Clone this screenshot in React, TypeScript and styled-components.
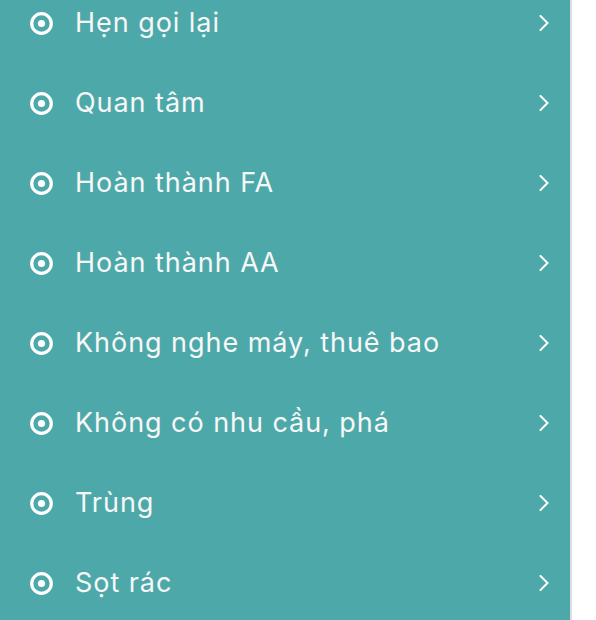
import React from "react";
import styled, { createGlobalStyle } from "styled-components";

const GlobalStyle = createGlobalStyle`
  html, body {
    margin: 0;
    padding: 0;
    background: #ffffff;
    overflow: hidden;
  }
  body {
    font-family: Inter, "Noto Sans", sans-serif;
  }
`;

const Page = styled.div`
  display: flex;
  width: 596px;
  height: 620px;
  overflow: hidden;
  background: #ffffff;
`;

const Panel = styled.nav`
  width: 570px;
  height: 620px;
  flex: 0 0 auto;
  background: #4da9a9;
  border-right: 2px solid #dedede;
  overflow: hidden;
`;

const List = styled.ul`
  list-style: none;
  margin: -17px 0 0 0;
  padding: 0;
  display: flex;
  flex-direction: column;
`;

const Row = styled.li`
  height: 80px;
  display: flex;
  align-items: center;
  padding: 0 21px 0 30px;
  gap: 22px;
  color: #f7f7f7;
`;

const Label = styled.span`
  flex: 1;
  font-family: Inter, "Noto Sans", sans-serif;
  font-size: 27px;
  font-weight: 400;
  letter-spacing: 0.95px;
  line-height: 32px;
  white-space: nowrap;
`;

const RadioIcon = () => (
  <svg width="23" height="23" viewBox="0 0 23 23" aria-hidden>
    <circle cx="11.5" cy="11.5" r="9.8" fill="none" stroke="#ffffff" strokeWidth="3.2" />
    <circle cx="11.5" cy="11.5" r="3.6" fill="#ffffff" />
  </svg>
);

const Chevron = () => (
  <svg width="10" height="16" viewBox="0 0 10 16" aria-hidden>
    <path d="M1.5 1 L8.5 8 L1.5 15" fill="none" stroke="#ffffff" strokeWidth="2" strokeLinecap="square" />
  </svg>
);

const items = [
  "Hẹn gọi lại",
  "Quan tâm",
  "Hoàn thành FA",
  "Hoàn thành AA",
  "Không nghe máy, thuê bao",
  "Không có nhu cầu, phá",
  "Trùng",
  "Sọt rác",
];

export default function App() {
  return (
    <>
      <GlobalStyle />
      <Page>
        <Panel>
          <List>
            {items.map((t) => (
              <Row key={t}>
                <RadioIcon />
                <Label>{t}</Label>
                <Chevron />
              </Row>
            ))}
          </List>
        </Panel>
      </Page>
    </>
  );
}
